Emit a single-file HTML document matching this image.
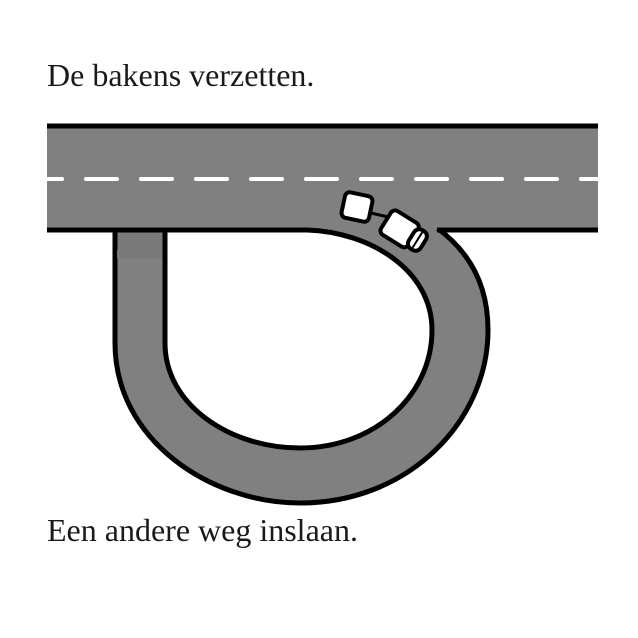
<!DOCTYPE html>
<html><head><style>
html,body{margin:0;padding:0;background:#fff;}
.t{position:absolute;left:47px;font-family:"Liberation Serif",serif;font-size:32px;color:#1a1a1a;letter-spacing:0px;white-space:nowrap;}
</style></head><body>
<div class="t" style="top:57px">De bakens verzetten.</div>
<svg width="638" height="638" style="position:absolute;left:0;top:0">
<path d="M115,215 L115,343 C115,440 210,503 300,503 C410,503 488,420 488,330 C488,285 470,252 437,228 L430,215 Z" fill="#808080" stroke="#000" stroke-width="5"/>
<rect x="117" y="232" width="46" height="26" fill="#797979"/>
<rect x="47" y="126" width="551" height="104" fill="#808080"/>
<line x1="47" y1="126" x2="598" y2="126" stroke="#000" stroke-width="5"/>
<line x1="47" y1="179" x2="598" y2="179" stroke="#fff" stroke-width="4" stroke-dasharray="31 24" stroke-dashoffset="16" stroke-linecap="round"/>
<path d="M165,232 L165,343 C165,405 230,448 300,448 C375,448 432,395 432,330 C432,270 370,232 307,232 Z" fill="#fff"/>
<path d="M47,230 L307,230 C370,232 432,270 432,330 C432,395 375,448 300,448 C230,448 165,405 165,343 L165,230" fill="none" stroke="#000" stroke-width="5"/>
<line x1="115" y1="230" x2="115" y2="250" stroke="#000" stroke-width="5"/>
<path d="M437,230 L598,230" stroke="#000" stroke-width="5"/>
<g transform="translate(357,207) rotate(12)">
<rect x="-14" y="-13" width="28" height="26" rx="5" fill="#fff" stroke="#000" stroke-width="4"/>
</g>
<line x1="371" y1="213" x2="388" y2="217" stroke="#000" stroke-width="3"/>
<g transform="translate(403,231) rotate(32)">
<rect x="-20" y="-14" width="32" height="28" rx="5" fill="#fff" stroke="#000" stroke-width="4"/>
<rect x="10" y="-11" width="14" height="22" rx="6" fill="#fff" stroke="#000" stroke-width="4"/>
<line x1="17" y1="-9" x2="17" y2="9" stroke="#000" stroke-width="2"/>
</g>
</svg>
<div class="t" style="top:512px">Een andere weg inslaan.</div>
</body></html>
